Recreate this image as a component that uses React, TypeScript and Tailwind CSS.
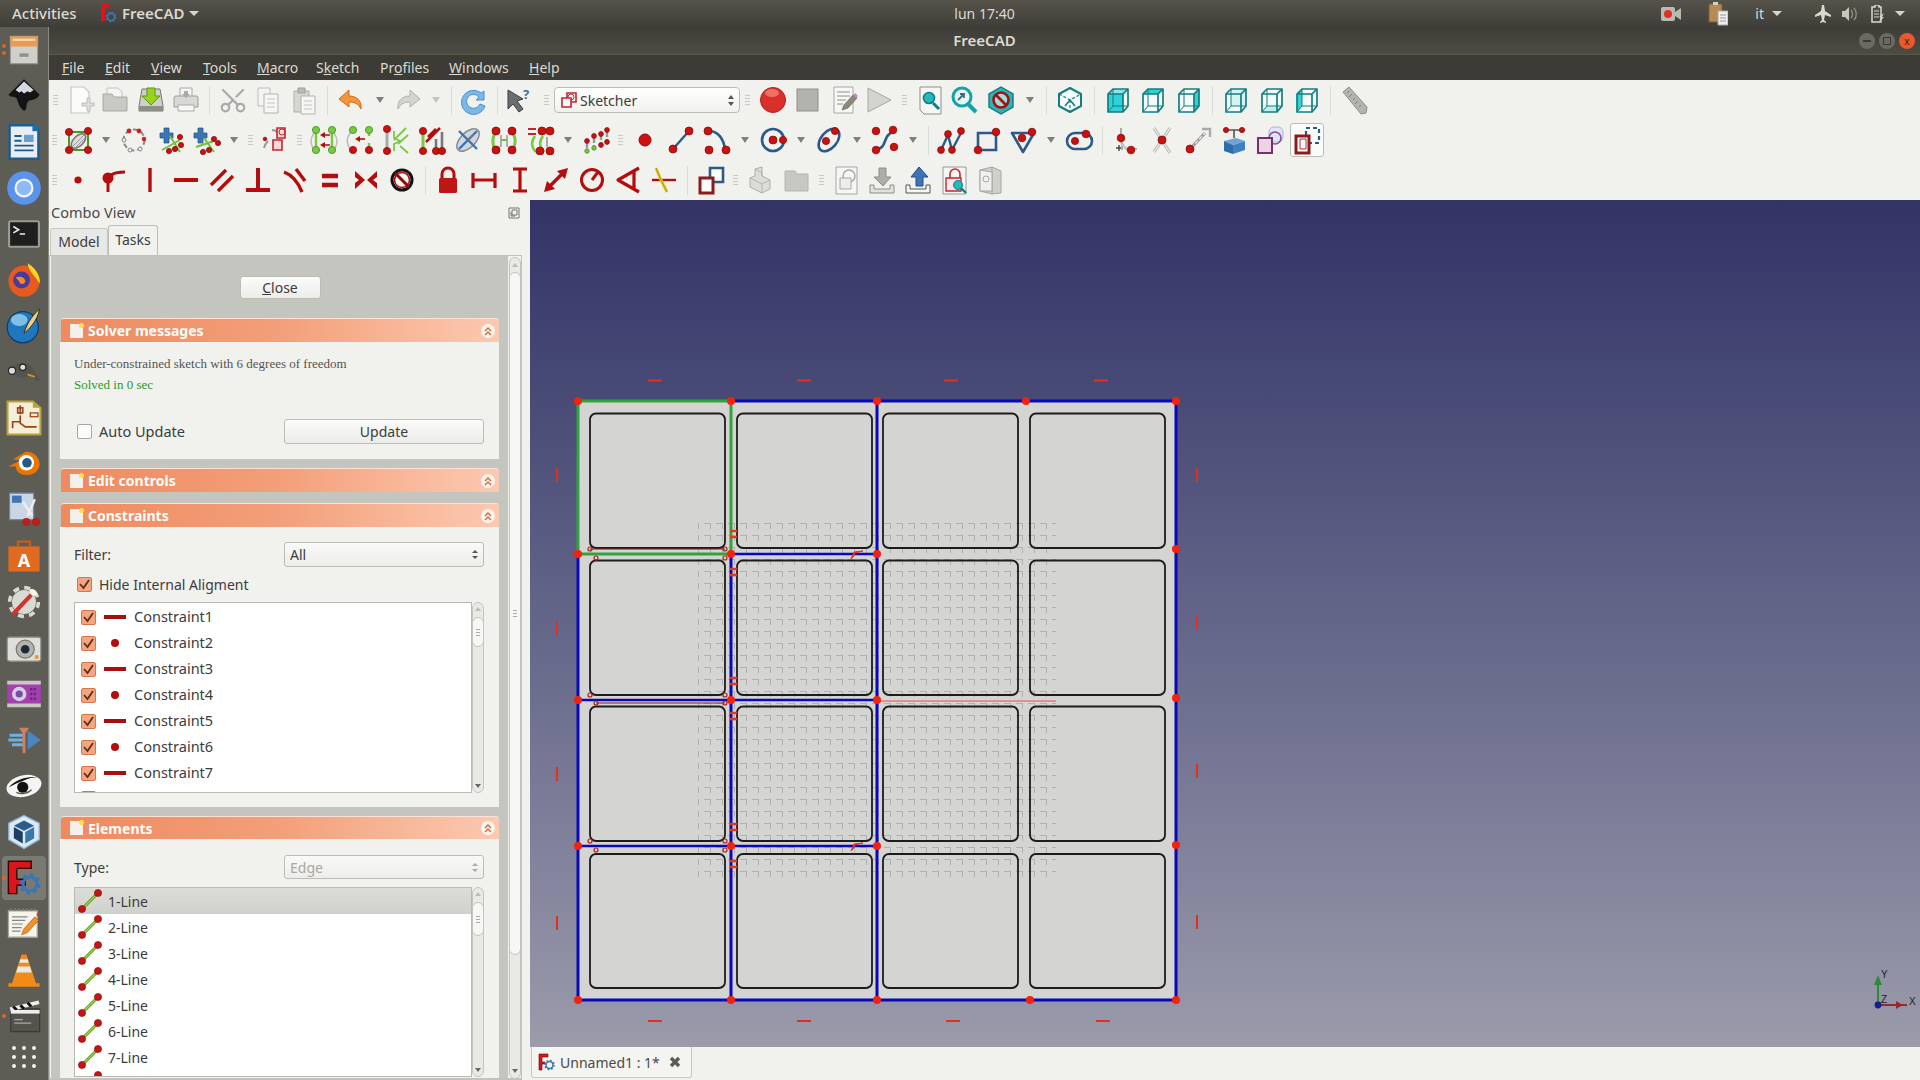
import type { ReactNode } from "react";
import { Scissors } from "lucide-react";

const ui = { fontFamily: '"Noto Sans", sans-serif' };

function Ic({ children, size = 30, view = 30 }: { children: ReactNode; size?: number; view?: number }) {
  return (
    <svg width={size} height={size} viewBox={`0 0 ${view} ${view}`} className="block">
      {children}
    </svg>
  );
}

// red sketch point
const R = ({ x, y, r = 3.6 }: { x: number; y: number; r?: number }) => (
  <circle cx={x} cy={y} r={r} fill="#cc1010" stroke="#8a0b0b" strokeWidth="0.8" />
);
const G = ({ x, y, r = 3.6 }: { x: number; y: number; r?: number }) => (
  <circle cx={x} cy={y} r={r} fill="#7ac943" stroke="#3f8a1c" strokeWidth="0.8" />
);

const Page = ({ c = "#b8b8b4", f = "#fbfbf9" }: { c?: string; f?: string }) => (
  <path d="M6 2h13l5 5v21H6z" fill={f} stroke={c} strokeWidth="1.2" />
);

function Cube({ face }: { face?: "front" | "top" | "right" | "rear" | "bottom" | "left" | "iso" }) {
  const teal = "#157d80";
  const hi = "#2fd3d6";
  return (
    <Ic>
      <path d="M5 9l5-5h15v17l-5 6H5z" fill="#f2fafa" />
      {face === "front" && <path d="M5 9h15v18H5z" fill={hi} />}
      {face === "front" && <path d="M5 9l5-5h15l-5 5z" fill="#8ce6e8" />}
      {face === "top" && <path d="M5 9l5-5h15l-5 5z" fill={hi} />}
      {face === "right" && <path d="M20 9l5-5v17l-5 6z" fill={hi} />}
      {face === "rear" && <path d="M10 4h15v17H10z" fill="#d5f3f3" />}
      {face === "bottom" && <path d="M5 27l5-6h15l-5 6z" fill="#bfeeee" />}
      {face === "left" && <path d="M5 9l5-5v17l-5 6z" fill={hi} />}
      <path d="M5 9l5-5h15v17l-5 6H5z" fill="none" stroke={teal} strokeWidth="1.7" strokeLinejoin="round" />
      <path d="M5 9h15v18M20 9l5-5" fill="none" stroke={teal} strokeWidth="1.7" />
      <path d="M10 4v17h15M10 21l-5 6" fill="none" stroke={teal} strokeWidth="1" />
    </Ic>
  );
}

const IsoCube = () => (
  <Ic>
    <path d="M15 3l11 6v12l-11 6-11-6V9z" fill="#f4fbfb" stroke="#157d80" strokeWidth="2" strokeLinejoin="round" />
    <path d="M4 9l11 6 11-6M15 15v12" fill="none" stroke="#157d80" strokeWidth="1.2" strokeDasharray="3 2" />
    <path d="M10 21l5-6 5 6" fill="none" stroke="#157d80" strokeWidth="1.6" />
  </Ic>
);

const Gear = ({ x, y, s = 1, c = "#3d74b5" }: { x: number; y: number; s?: number; c?: string }) => (
  <g>
    <circle cx={x} cy={y} r={5.8 * s} fill="none" stroke={c} strokeWidth={2.6 * s} />
    <circle cx={x} cy={y} r={7.8 * s} fill="none" stroke={c} strokeWidth={2.2 * s} strokeDasharray={`${3 * s} ${3.1 * s}`} />
  </g>
);

const Constraint = ({ d, w = 3.4 }: { d: string; w?: number }) => (
  <Ic>
    <path d={d} fill="none" stroke="#b30d0d" strokeWidth={w} strokeLinejoin="round" />
  </Ic>
);

const icons: Record<string, ReactNode> = {
  new: (
    <Ic>
      <Page c="#c6c6c2" />
      <path d="M17 18h5v-5h3v5h4v3h-4v5h-3v-5h-5z" fill="#dededa" stroke="#b5b5b0" strokeWidth="0.8" />
    </Ic>
  ),
  open: (
    <Ic>
      <path d="M7 3h11l4 4v8H7z" fill="#f4f4f2" stroke="#c2c2be" />
      <path d="M3 9h9l2 3h13v14H3z" fill="#c9c9c4" stroke="#a9a9a4" />
    </Ic>
  ),
  save: (
    <Ic>
      <path d="M6 4h18l3 17v5H3v-5z" fill="#cfd0cb" stroke="#77786f" />
      <path d="M3 21h24v5H3z" fill="#8d8e85" />
      <path d="M11 3h8v8h5l-9 9-9-9h5z" fill="#97d21f" stroke="#5d9416" />
    </Ic>
  ),
  print: (
    <Ic>
      <path d="M9 3h12v9H9z" fill="#f5f5f3" stroke="#a8a8a4" />
      <path d="M4 11h22a2 2 0 0 1 1 2v9H3v-9z" fill="#d8d8d4" stroke="#9c9c98" />
      <path d="M7 20h16v6H7z" fill="#f7f7f5" stroke="#a8a8a4" />
      <path d="M13 6h4v3h2l-4 4-4-4h2z" fill="#a9a9a5" />
    </Ic>
  ),
  cut: <Scissors size={30} strokeWidth={1.8} color="#a9aca9" className="-rotate-90" />,
  copy: (
    <Ic>
      <path d="M5 3h12v18H5z" fill="#f4f4f2" stroke="#bdbdb9" />
      <path d="M11 9h14v19H11z" fill="#f6f6f4" stroke="#b2b2ae" />
      <path d="M14 14h8M14 18h8M14 22h8" stroke="#c4c4c0" />
    </Ic>
  ),
  paste: (
    <Ic>
      <path d="M5 6h15v21H5z" fill="#d6d6d2" stroke="#b0b0ac" />
      <path d="M9 3h7v5H9z" fill="#bbbbb7" stroke="#9e9e9a" />
      <path d="M12 11h14v18H12z" fill="#f6f6f4" stroke="#b2b2ae" />
      <path d="M15 16h8M15 20h8M15 24h8" stroke="#c4c4c0" />
    </Ic>
  ),
  undo: (
    <Ic>
      <path d="M13 5L3 14l10 8v-5c5 0 9 1 12 7 1-8-4-13-12-13z" fill="#f39538" stroke="#cf6a1c" strokeLinejoin="round" />
    </Ic>
  ),
  redo: (
    <Ic>
      <path d="M17 5l10 9-10 8v-5c-5 0-9 1-12 7-1-8 4-13 12-13z" fill="#d4d5d1" stroke="#b1b2ae" strokeLinejoin="round" />
    </Ic>
  ),
  refresh: (
    <Ic>
      <path d="M25 6v9h-8l3-3a7 7 0 1 0 1 7l5 2A12 12 0 1 1 22 8z" fill="#7ab8ea" stroke="#4a90cc" />
    </Ic>
  ),
  whats: (
    <Ic>
      <path d="M2 5l15 9-6 2 6 8-4 3-6-8-5 5z" fill="#6b6e6e" stroke="#3c3e3e" />
      <text x="17" y="14" fontSize="13" fontWeight="700" fill="#3b6ea8" style={ui}>?</text>
    </Ic>
  ),
  record: (
    <Ic>
      <circle cx="15" cy="15" r="12.5" fill="#d9302a" stroke="#b01e18" />
      <ellipse cx="14" cy="8" rx="7" ry="4" fill="#f07068" />
    </Ic>
  ),
  stop: (
    <Ic>
      <rect x="4" y="4" width="21" height="22" fill="#b2b2ae" stroke="#8f8f8b" />
    </Ic>
  ),
  edit: (
    <Ic>
      <path d="M5 2h19v26H5z" fill="#f7f7f5" stroke="#a8a8a4" />
      <path d="M8 7h13M8 11h13M8 15h9M8 19h6" stroke="#8e8e8a" />
      <path d="M13 25l2-5 9-10 4 3-9 10z" fill="#8a8a7a" stroke="#55554a" strokeWidth="0.6" />
      <path d="M24 10l2-2 3 3-2 2z" fill="#c88ac4" />
    </Ic>
  ),
  play: (
    <Ic>
      <path d="M4 3l23 12L4 27z" fill="#d3d4d0" stroke="#a6a7a3" />
    </Ic>
  ),
  fitall: (
    <Ic>
      <path d="M5 2h21v27H9l-4-4z" fill="#f6f6f4" stroke="#8e8e8a" />
      <circle cx="14" cy="13" r="5.5" fill="#27b8bd" stroke="#117e83" strokeWidth="1.6" />
      <path d="M18 18l6 6" stroke="#117e83" strokeWidth="3" />
    </Ic>
  ),
  fitsel: (
    <Ic>
      <circle cx="12" cy="12" r="9" fill="#e7f7f7" stroke="#17a2a7" strokeWidth="3" />
      <path d="M18 19l8 8" stroke="#17a2a7" strokeWidth="4" />
      <path d="M8 15l6-6m-4 0h4v4" fill="none" stroke="#3d6d7a" strokeWidth="1.8" />
    </Ic>
  ),
  draw: (
    <Ic>
      <path d="M15 2l12 7v13l-12 7-12-7V9z" fill="#2ab5b8" stroke="#14787b" strokeWidth="1.4" />
      <circle cx="15" cy="15" r="7.5" fill="#9fdcdc" stroke="#a11212" strokeWidth="2.6" />
      <path d="M10 10l10 10" stroke="#a11212" strokeWidth="2.6" />
    </Ic>
  ),
  iso: <IsoCube />,
  front: <Cube face="front" />,
  top: <Cube face="top" />,
  right: <Cube face="right" />,
  rear: <Cube face="rear" />,
  bottom: <Cube face="bottom" />,
  left: <Cube face="left" />,
  ruler: (
    <Ic>
      <path d="M4 7l6-5 18 20-1 6-5 1z" fill="#b3b3af" stroke="#8f8f8b" />
      <path d="M10 6l-2 2M13 9l-3 3M16 13l-2 2M19 16l-3 3M22 20l-2 2" stroke="#7d7d79" />
    </Ic>
  ),

  // row 2, sketcher tools
  validate: (
    <Ic>
      <path d="M6 7h19v18H6z" fill="none" stroke="#4a9a22" strokeWidth="2" />
      <ellipse cx="15.5" cy="16" rx="9" ry="5" transform="rotate(-45 15.5 16)" fill="#dcdcd8" stroke="#777" strokeWidth="1.6" />
      <path d="M10 21l11-11M13 22l9-9" stroke="#999" />
      <R x={6} y={7} /><R x={25} y={6} /><R x={6} y={25} /><R x={25} y={25} />
    </Ic>
  ),
  closeShape: (
    <Ic>
      <circle cx="15" cy="15" r="10.5" fill="none" stroke="#8a8a86" strokeWidth="2" strokeDasharray="5 3" />
      <circle cx="10" cy="6" r="2.4" fill="#c22" /><circle cx="20" cy="6" r="2.4" fill="#c22" />
      <circle cx="25" cy="14" r="2.2" fill="#c22" /><circle cx="5" cy="15" r="2" fill="#eee" stroke="#888" />
      <circle cx="21" cy="24" r="2" fill="#eee" stroke="#888" /><circle cx="11" cy="25" r="2" fill="#eee" stroke="#888" />
    </Ic>
  ),
  connect1: (
    <Ic>
      <path d="M9 3h5v5h4v5h-4v5H9v-5H5V8h4z" fill="#3d74b5" stroke="#234f85" strokeWidth="0.7" />
      <path d="M7 25l18-10M15 11l10 16" stroke="#6fc23a" strokeWidth="2" />
      <R x={25} y={12} r={2.6} /><R x={20} y={24} r={2.6} /><R x={14} y={26} r={2.6} /><R x={26} y={20} r={2.6} />
    </Ic>
  ),
  connect2: (
    <Ic>
      <path d="M7 3h5v5h4v5h-4v5H7v-5H3V8h4z" fill="#3d74b5" stroke="#234f85" strokeWidth="0.7" />
      <path d="M5 22l18-6M13 13l10 14" stroke="#6fc23a" strokeWidth="2" />
      <R x={23} y={14} r={2.6} /><R x={18} y={25} r={2.6} /><R x={12} y={27} r={2.6} /><R x={27} y={18} r={2.6} />
    </Ic>
  ),
  carbonTop: (
    <Ic>
      <path d="M5 23c1-4 2-5 4-7M13 5c4 0 5 1 7 3" fill="none" stroke="#999" strokeWidth="2" />
      <path d="M14 15h9v10h-9z" fill="#f8d9d9" stroke="#c0272d" strokeWidth="1.6" />
      <path d="M18 3h8v10h-8z" fill="#f8d9d9" stroke="#c0272d" strokeWidth="1.6" />
      <circle cx="23" cy="7" r="3" fill="none" stroke="#c0272d" />
      <R x={6} y={14} r={1.8} />
    </Ic>
  ),
  sel1: (
    <Ic>
      <path d="M7 5v21M23 5v21" stroke="#7ac943" strokeWidth="2.4" />
      <path d="M5 8c-4 6-4 10 0 17M25 8c4 6 4 10 0 17" fill="none" stroke="#bbb" strokeWidth="1.4" />
      <path d="M21 10h-7M21 20h-7" stroke="#b30d0d" strokeWidth="1.6" />
      <path d="M11 10l5-3v6zM11 20l5-3v6z" fill="#b30d0d" />
      <G x={7} y={5} /><G x={23} y={5} /><G x={7} y={25} /><G x={23} y={25} />
    </Ic>
  ),
  sel2: (
    <Ic>
      <path d="M24 5v6M24 18v8" stroke="#7ac943" strokeWidth="2.4" />
      <path d="M6 7c-5 6-5 12 0 18" fill="none" stroke="#bbb" strokeWidth="1.4" />
      <path d="M20 14h-7" stroke="#b30d0d" strokeWidth="1.6" />
      <path d="M10 14l5-3v6z" fill="#b30d0d" />
      <G x={8} y={5} /><R x={8} y={25} /><G x={24} y={5} /><R x={24} y={25} />
    </Ic>
  ),
  sel3: (
    <Ic>
      <path d="M6 4v23" stroke="#aaa" strokeWidth="3" />
      <path d="M13 6v7l6 3-6 3v7" fill="none" stroke="#7ac943" strokeWidth="1.8" />
      <path d="M13 15l12-12M17 19l10-9M19 21l8 7" stroke="#7ac943" strokeWidth="1.8" />
      <R x={6} y={4} /><R x={6} y={26} />
    </Ic>
  ),
  sel4: (
    <Ic>
      <path d="M6 6v20" stroke="#7ac943" strokeWidth="3" />
      <path d="M25 7v20M19 14v13" stroke="#7a7a7a" strokeWidth="2.6" />
      <path d="M9 17L23 3M11 12l8-8" stroke="#b30d0d" strokeWidth="2.6" />
      <R x={6} y={6} /><R x={6} y={26} /><R x={19} y={26} /><R x={25} y={26} />
    </Ic>
  ),
  sel5: (
    <Ic>
      <ellipse cx="15" cy="15" rx="7.5" ry="14" transform="rotate(45 15 15)" fill="#ccd8e4" stroke="#888" strokeWidth="1.4" />
      <path d="M6 6l18 18M24 6L6 24" stroke="#3d74b5" strokeWidth="2.4" />
      <path d="M21 9l-6 6" stroke="#777" strokeWidth="2" />
    </Ic>
  ),
  sel6: (
    <Ic>
      <path d="M6 8c-3 6-3 11 0 16M24 8c3 6 3 11 0 16" fill="none" stroke="#7ac943" strokeWidth="3" />
      <path d="M12 10v12M18 10v12" stroke="#999" strokeWidth="1.5" />
      <path d="M12 15h6" stroke="#6fc23a" strokeWidth="2" />
      <R x={7} y={6} r={4} /><R x={23} y={6} r={4} /><R x={7} y={25} r={4} /><R x={23} y={25} r={4} />
    </Ic>
  ),
  sel7: (
    <Ic>
      <path d="M3 4h8M3 9h8" stroke="#c0272d" strokeWidth="2" />
      <path d="M10 11c-4 5-4 11 1 16M18 11c-4 5-4 11 1 16" fill="none" stroke="#7ac943" strokeWidth="2.6" />
      <path d="M22 12v10" stroke="#aaa" strokeWidth="2" />
      <R x={17} y={6} r={4} /><R x={25} y={6} r={4} /><R x={15} y={26} r={4} /><R x={25} y={26} r={4} />
    </Ic>
  ),
  sel8: (
    <Ic>
      <path d="M6 17v8M13 12v10M20 9v11M26 6v10" stroke="#999" strokeWidth="2.4" strokeDasharray="6 2" />
      <R x={6} y={16} r={2.4} /><R x={13} y={11} r={2.4} /><R x={20} y={9} r={2.4} /><R x={26} y={5} r={2.4} />
      <G x={6} y={26} r={2.2} /><G x={13} y={23} r={2.2} /><R x={20} y={20} r={2.4} /><R x={26} y={17} r={2.4} />
    </Ic>
  ),
  point: (
    <Ic>
      <circle cx="15" cy="15" r="6" fill="#d40f0f" stroke="#8a0b0b" />
    </Ic>
  ),
  line: (
    <Ic>
      <path d="M7 24L23 6" stroke="#2b5a8a" strokeWidth="2.4" />
      <R x={7} y={24} r={4} /><R x={23} y={6} r={4} />
    </Ic>
  ),
  arc: (
    <Ic>
      <path d="M7 6c9 0 15 8 16 19" fill="none" stroke="#2b5a8a" strokeWidth="2.6" />
      <R x={6} y={6} r={4} /><R x={7} y={25} r={4} /><R x={24} y={25} r={4} />
    </Ic>
  ),
  circle: (
    <Ic>
      <circle cx="15" cy="15" r="11" fill="none" stroke="#2b5a8a" strokeWidth="2.6" />
      <R x={15} y={15} r={4} /><R x={25} y={15} r={3.6} />
    </Ic>
  ),
  ellipse: (
    <Ic>
      <ellipse cx="15" cy="15" rx="8" ry="13" transform="rotate(40 15 15)" fill="none" stroke="#2b5a8a" strokeWidth="2.6" />
      <R x={12} y={16} r={3.6} /><R x={21} y={6} r={3.6} />
    </Ic>
  ),
  bspline: (
    <Ic>
      <path d="M6 24c12 0 6-15 18-17" fill="none" stroke="#2b5a8a" strokeWidth="2.6" />
      <R x={6} y={6} r={3.8} /><R x={23} y={5} r={3.8} /><R x={6} y={25} r={3.8} /><R x={24} y={22} r={3.8} />
    </Ic>
  ),
  polyline: (
    <Ic>
      <path d="M5 25l7-15 4 15 10-19" fill="none" stroke="#2b5a8a" strokeWidth="2.4" />
      <R x={5} y={25} r={3.4} /><R x={12} y={9} r={3.4} /><R x={16} y={25} r={3.4} /><R x={25} y={6} r={3.4} />
    </Ic>
  ),
  rect: (
    <Ic>
      <path d="M6 8h18v17H6z" fill="none" stroke="#2b5a8a" strokeWidth="2.6" />
      <R x={6} y={25} r={3.8} /><R x={24} y={7} r={3.8} />
    </Ic>
  ),
  tri: (
    <Ic>
      <path d="M4 8h22L15 27z" fill="none" stroke="#2b5a8a" strokeWidth="2.6" strokeLinejoin="round" />
      <R x={14} y={13} r={3.8} /><R x={24} y={7} r={3.8} />
    </Ic>
  ),
  slot: (
    <Ic>
      <rect x="3" y="8" width="25" height="16" rx="8" fill="none" stroke="#2b5a8a" strokeWidth="2.6" />
      <R x={11} y={16} r={3.6} /><R x={22} y={9} r={3.8} />
    </Ic>
  ),
  fillet: (
    <Ic>
      <path d="M10 3v14l5 7h11M11 25V18" fill="none" stroke="#999" strokeWidth="1.6" />
      <path d="M5 23h5M8 20v6" stroke="#444" strokeWidth="1.4" />
      <path d="M10 19l8 6" stroke="#ccc" strokeWidth="2" />
      <R x={10} y={13} r={3.8} /><R x={20} y={25} r={3.8} />
    </Ic>
  ),
  trim: (
    <Ic>
      <path d="M7 3l16 25M23 3L7 27" stroke="#b0b0ac" strokeWidth="3" />
      <path d="M7 3l16 25M23 3L7 27" stroke="#f4f4f2" strokeWidth="1.2" />
      <R x={15} y={15} r={4} />
    </Ic>
  ),
  extend: (
    <Ic>
      <path d="M8 23l14-15" stroke="#999" strokeWidth="3" />
      <path d="M8 23l14-15" stroke="#f4f4f2" strokeWidth="1.2" strokeDasharray="4 2" />
      <path d="M19 4h8v8" fill="none" stroke="#aaa" strokeWidth="2.4" />
      <R x={7} y={24} r={4} />
    </Ic>
  ),
  external: (
    <Ic>
      <path d="M5 16l12-3 9 3-12 4z" fill="#6fa3d6" />
      <path d="M5 16v10l9 3V20z" fill="#2f6ca8" />
      <path d="M14 20v9l12-4v-9z" fill="#3f82c4" />
      <path d="M6 5h18M15 5v8" stroke="#555" strokeWidth="1.6" />
      <R x={7} y={5} r={2.6} /><R x={23} y={5} r={2.6} />
    </Ic>
  ),
  carbon: (
    <Ic>
      <rect x="14" y="2" width="14" height="15" rx="5" fill="#dfe6fa" stroke="#a8b4e8" />
      <circle cx="20" cy="13" r="6" fill="none" stroke="#8f4d8f" strokeWidth="1.6" />
      <path d="M3 13h14v15H3z" fill="#e9d6e4" stroke="#7d2d6f" strokeWidth="2" />
    </Ic>
  ),
  toggleActive: (
    <Ic>
      <path d="M14 3h13v15H14z" fill="none" stroke="#2b5a8a" strokeWidth="2.2" strokeDasharray="4 3" />
      <path d="M4 11h13v17H4z" fill="#fff" stroke="#8c1c1c" strokeWidth="3" />
      <path d="M8 14h6v10H8z" fill="#fff" stroke="#c0272d" strokeWidth="1" />
    </Ic>
  ),

  // row 3, constraints
  cPoint: (
    <Ic>
      <circle cx="15" cy="15" r="3.6" fill="#b30d0d" />
    </Ic>
  ),
  cTangentPt: (
    <Ic>
      <path d="M9 27V16c0-6 6-9 17-9" fill="none" stroke="#b30d0d" strokeWidth="3" />
      <circle cx="9" cy="13" r="5.5" fill="#b30d0d" />
    </Ic>
  ),
  cVert: <Constraint d="M15 3v24" />,
  cHoriz: <Constraint d="M3 15h24" w={4} />,
  cPar: <Constraint d="M4 20L19 5M11 26L26 11" w={3.4} />,
  cPerp: <Constraint d="M15 3v22M3 25h24" w={4} />,
  cTan: <Constraint d="M5 7c8 3 14 10 18 20M17 4l9 12" w={3.4} />,
  cEq: <Constraint d="M7 11h16M7 20h16" w={4.4} />,
  cSym: (
    <Ic>
      <path d="M4 6l10 9L4 24v-6l4-3-4-3zM26 6L16 15l10 9v-6l-4-3 4-3z" fill="#b30d0d" />
    </Ic>
  ),
  cBlock: (
    <Ic>
      <circle cx="15" cy="15" r="10" fill="#f4f4f2" stroke="#111" strokeWidth="3" />
      <circle cx="15" cy="15" r="7.5" fill="none" stroke="#b30d0d" strokeWidth="1.6" />
      <path d="M8 8l14 14" stroke="#8a0b0b" strokeWidth="3" />
    </Ic>
  ),
  lock: (
    <Ic>
      <path d="M9 14V9a6 6 0 0 1 12 0v5" fill="none" stroke="#b30d0d" strokeWidth="3" />
      <rect x="6" y="13" width="18" height="15" rx="1.5" fill="#c01515" />
    </Ic>
  ),
  dH: <Constraint d="M4 8v15M26 8v15M4 15h22" w={3.2} />,
  dV: <Constraint d="M8 4h14M8 26h14M15 4v22" w={3.2} />,
  dist: (
    <Ic>
      <path d="M8 22L22 8" stroke="#b30d0d" strokeWidth="3.4" />
      <path d="M27 3l-3 11-8-8zM3 27l3-11 8 8z" fill="#b30d0d" />
    </Ic>
  ),
  radius: (
    <Ic>
      <circle cx="15" cy="15" r="10.5" fill="none" stroke="#b30d0d" strokeWidth="3" />
      <path d="M15 15l6-8" stroke="#b30d0d" strokeWidth="3" />
    </Ic>
  ),
  angle: <Constraint d="M26 3L5 15l21 12M21 6v18" w={3.2} />,
  snell: (
    <Ic>
      <path d="M3 15h24" stroke="#b30d0d" strokeWidth="2.4" />
      <path d="M7 3l5 12 6 12" fill="none" stroke="#e2c81c" strokeWidth="3" />
      <path d="M7 3l5 12 6 12" fill="none" stroke="#7d6a08" strokeWidth="0.5" />
    </Ic>
  ),
  toggleRef: (
    <Ic>
      <path d="M14 3h13v14H14z" fill="#fff" stroke="#2b5a8a" strokeWidth="2.6" />
      <path d="M4 13h13v15H4z" fill="#fff" stroke="#8c1c1c" strokeWidth="3" />
    </Ic>
  ),
  part: (
    <Ic>
      <path d="M10 4l7-2v9l8 4v9l-8 4-12-6v-9l5-2z" fill="#dcdcd8" stroke="#adadA8" />
      <path d="M5 13l12 6v9M17 19l8-4M10 4l7 4v3" fill="none" stroke="#b5b5b0" />
    </Ic>
  ),
  folder: (
    <Ic>
      <path d="M4 6h10l2 3h11v17H4z" fill="#c8c8c3" stroke="#b5b5b0" />
    </Ic>
  ),
  tool1: (
    <Ic>
      <path d="M5 2h21v27H5z" fill="#f6f6f4" stroke="#a6a6a2" />
      <circle cx="18" cy="11" r="6" fill="none" stroke="#a6a6a2" strokeWidth="1.4" />
      <path d="M9 13h11v11H9z" fill="#ededea" stroke="#a6a6a2" />
    </Ic>
  ),
  tool2: (
    <Ic>
      <path d="M12 3h7v9h5l-8 9-9-9h5z" fill="#acacA8" stroke="#8e8e8a" />
      <path d="M3 20v8h24v-8h-4v4H7v-4z" fill="#e2e2de" stroke="#8e8e8a" />
    </Ic>
  ),
  tool3: (
    <Ic>
      <path d="M16 2l9 10h-5v9h-7v-9H8z" fill="#3d74b5" stroke="#234f85" />
      <path d="M3 20v8h24v-8h-4v4H7v-4z" fill="#f6f6f4" stroke="#555" />
    </Ic>
  ),
  tool4: (
    <Ic>
      <path d="M4 2h23v27H4z" fill="#f6f6f4" stroke="#999" />
      <path d="M11 14V9a5 5 0 0 1 10 0v5" fill="none" stroke="#c0272d" strokeWidth="1.6" />
      <path d="M7 13h15v13H7z" fill="#fbe9e9" stroke="#c0272d" strokeWidth="1.4" />
      <circle cx="19" cy="20" r="4.5" fill="#27b8bd" stroke="#117e83" />
      <path d="M22 23l5 5" stroke="#117e83" strokeWidth="2.4" />
    </Ic>
  ),
  tool5: (
    <Ic>
      <path d="M5 5l12-3 9 4v22l-9 1-12-3z" fill="#cfcfcb" stroke="#a6a6a2" />
      <path d="M17 2v27" stroke="#a6a6a2" />
      <path d="M5 5v21h12V7z" fill="#f0f0ee" stroke="#a6a6a2" />
      <circle cx="11" cy="14" r="3" fill="none" stroke="#a6a6a2" />
    </Ic>
  ),
};

// toolbar pieces: icons are 35.5 or 36 wide, the rest fills the row up to its real x
function Tool({ name, wide }: { name: string; wide?: boolean }) {
  return <div className={`flex shrink-0 items-center justify-center ${wide ? "w-[36px]" : "w-[35.5px]"}`}>{icons[name]}</div>;
}
function Drop({ w = "w-[20px]", dim }: { w?: string; dim?: boolean }) {
  return (
    <div className={`flex shrink-0 items-center justify-center ${w}`}>
      <div className={`h-0 w-0 border-x-[4px] border-t-[6px] border-x-transparent ${dim ? "border-t-[#c4c4c0]" : "border-t-[#7f7f7b]"}`} />
    </div>
  );
}
function Sep({ w }: { w: string }) {
  return (
    <div className={`flex shrink-0 justify-center ${w}`}>
      <div className="h-[29px] w-px bg-[#dcdcd8]" />
    </div>
  );
}
function Handle({ w }: { w: string }) {
  return (
    <div className={`flex shrink-0 flex-col items-center justify-center gap-[2px] ${w}`}>
      <div className="h-px w-[5px] bg-[#c8c8c4]" />
      <div className="h-px w-[5px] bg-[#c8c8c4]" />
      <div className="h-px w-[5px] bg-[#c8c8c4]" />
      <div className="h-px w-[5px] bg-[#c8c8c4]" />
    </div>
  );
}

function Toolbars() {
  const row = "flex h-[40px] items-center";
  const W = ({ n }: { n: string }) => <Tool name={n} wide />;
  return (
    <div className="h-[120px] shrink-0 bg-[#f1f1ee]" style={ui}>
      <div className={row}>
        <Handle w="w-[13px]" />
        <Tool name="new" /><Tool name="open" /><Tool name="save" /><Tool name="print" />
        <Sep w="w-[11px]" />
        <Tool name="cut" /><Tool name="copy" /><Tool name="paste" />
        <Sep w="w-[11.5px]" />
        <Tool name="undo" /><Drop w="w-[22px]" />
        <Tool name="redo" /><Drop dim />
        <Sep w="w-[10px]" />
        <Tool name="refresh" />
        <Sep w="w-[12px]" />
        <Tool name="whats" />
        <Handle w="w-[15px]" />
        <div className="flex h-[26px] w-[186px] shrink-0 items-center rounded-[4px] border border-[#bdbdb8] bg-linear-to-b from-[#ffffff] to-[#f1f1ee] pl-[6px] text-[14px] text-[#3c3c3c]">
          <svg width="16" height="16" viewBox="0 0 16 16" className="mr-[3px]">
            <path d="M6 1h9v9H6z" fill="#fff" stroke="#c0272d" strokeWidth="1.6" />
            <circle cx="10" cy="5" r="3" fill="none" stroke="#c0272d" />
            <path d="M1 6h9v9H1z" fill="#fff" stroke="#c0272d" strokeWidth="1.6" />
          </svg>
          Sketcher
          <div className="ml-auto mr-[5px] flex flex-col gap-[3px]">
            <div className="h-0 w-0 border-x-[3px] border-b-[4px] border-x-transparent border-b-[#555]" />
            <div className="h-0 w-0 border-x-[3px] border-t-[4px] border-x-transparent border-t-[#555]" />
          </div>
        </div>
        <Handle w="w-[15px]" />
        <Tool name="record" /><Tool name="stop" /><Tool name="edit" /><Tool name="play" />
        <Handle w="w-[15px]" />
        <Tool name="fitall" /><Tool name="fitsel" /><Tool name="draw" /><Drop w="w-[22px]" />
        <Sep w="w-[12px]" />
        <Tool name="iso" />
        <Sep w="w-[12px]" />
        <Tool name="front" /><Tool name="top" /><Tool name="right" />
        <Sep w="w-[12px]" />
        <Tool name="rear" /><Tool name="bottom" /><Tool name="left" />
        <Sep w="w-[11px]" />
        <Tool name="ruler" />
      </div>
      <div className={row}>
        <Handle w="w-[11px]" />
        <W n="validate" /><Drop />
        <W n="closeShape" /><W n="connect1" /><W n="connect2" /><Drop />
        <Handle w="w-[12px]" />
        <W n="carbonTop" />
        <Handle w="w-[14px]" />
        <W n="sel1" /><W n="sel2" /><W n="sel3" /><W n="sel4" /><W n="sel5" /><W n="sel6" /><W n="sel7" /><Drop />
        <W n="sel8" />
        <Handle w="w-[13px]" />
        <W n="point" /><W n="line" /><W n="arc" /><Drop />
        <W n="circle" /><Drop />
        <W n="ellipse" /><Drop />
        <W n="bspline" /><Drop />
        <Sep w="w-[10px]" />
        <W n="polyline" /><W n="rect" /><W n="tri" /><Drop />
        <W n="slot" />
        <Sep w="w-[11px]" />
        <W n="fillet" /><W n="trim" /><W n="extend" /><W n="external" /><W n="carbon" />
        <div className="ml-[2px] flex h-[34px] w-[34px] shrink-0 items-center justify-center rounded-[3px] border border-[#bdbdb8] bg-[#fbfbfa]">
          {icons.toggleActive}
        </div>
      </div>
      <div className={row}>
        <Handle w="w-[11px]" />
        <W n="cPoint" /><W n="cTangentPt" /><W n="cVert" /><W n="cHoriz" /><W n="cPar" />
        <W n="cPerp" /><W n="cTan" /><W n="cEq" /><W n="cSym" /><W n="cBlock" />
        <Sep w="w-[10px]" />
        <W n="lock" /><W n="dH" /><W n="dV" /><W n="dist" /><W n="radius" /><W n="angle" /><W n="snell" />
        <Sep w="w-[11px]" />
        <W n="toggleRef" />
        <Handle w="w-[13px]" />
        <W n="part" /><W n="folder" />
        <Handle w="w-[14px]" />
        <W n="tool1" /><W n="tool2" /><W n="tool3" /><W n="tool4" /><W n="tool5" />
      </div>
    </div>
  );
}

function TopBar() {
  return (
    <div className="relative flex h-[27px] shrink-0 items-center bg-linear-to-b from-[#55534a] to-[#3f3e39] text-[14px] text-[#dcd9d1]" style={ui}>
      <span className="ml-[12px] w-[88px] text-[15px] font-medium">Activities</span>
      <svg width="18" height="20" viewBox="0 0 18 20">
        <path d="M1 0h9v4H5v13H1z" fill="#d9161c" />
        <Gear x={11} y={13} s={0.62} />
      </svg>
      <span className="ml-[4px] text-[15px] font-semibold">FreeCAD</span>
      <div className="ml-[5px] h-0 w-0 border-x-[5px] border-t-[5px] border-x-transparent border-t-[#d8d5cd]" />
      <span className="absolute left-[49px] right-0 text-center">lun 17:40</span>
      <div className="ml-auto flex items-center">
        <svg width="20" height="16" viewBox="0 0 20 16" className="mr-[27px]">
          <rect y="1" width="14" height="14" rx="2" fill="#b9b9b4" />
          <path d="M14 6l6-4v12l-6-4z" fill="#b9b9b4" />
          <circle cx="7" cy="8" r="4" fill="#e0301e" />
        </svg>
        <svg width="20" height="24" viewBox="0 0 20 24" className="mr-[27px]">
          <path d="M1 2h13v18H1z" fill="#b58a55" stroke="#7d5d32" />
          <path d="M5 0h5v3H5z" fill="#d6d2c8" />
          <path d="M10 9h10v14H10z" fill="#eee" stroke="#aaa" />
          <path d="M12 13h6M12 16h6M12 19h6" stroke="#999" />
        </svg>
        <span className="mr-[8px]">it</span>
        <div className="mr-[33px] h-0 w-0 border-x-[5px] border-t-[5px] border-x-transparent border-t-[#d8d5cd]" />
        <svg width="16" height="18" viewBox="0 0 16 18" className="mr-[11px]">
          <path d="M7 0h2l1 6 6 4v2l-6-2-1 5 2 2v1l-3-1-3 1v-1l2-2-1-5-6 2v-2l6-4z" fill="#dcd9d1" />
        </svg>
        <svg width="16" height="16" viewBox="0 0 16 16" className="mr-[13px]">
          <path d="M0 5h3l4-4v14l-4-4H0z" fill="#c9c6be" />
          <path d="M9 4c2 2 2 6 0 8M12 2c3 3 3 9 0 12" fill="none" stroke="#8f8d85" strokeWidth="1.4" />
        </svg>
        <svg width="14" height="18" viewBox="0 0 14 18" className="mr-[10px]">
          <path d="M4 0h4v2h2v15H1V2h3z" fill="none" stroke="#dcd9d1" strokeWidth="1.5" />
          <path d="M3 6h5M3 9h5M3 12h5" stroke="#dcd9d1" />
          <path d="M8 12l5-4-2 4h2l-5 5 2-5z" fill="#dcd9d1" />
        </svg>
        <div className="mr-[15px] h-0 w-0 border-x-[5px] border-t-[5px] border-x-transparent border-t-[#d8d5cd]" />
      </div>
    </div>
  );
}

function TitleBar() {
  const btn = "flex h-[16px] w-[16px] items-center justify-center rounded-full";
  return (
    <div className="relative flex h-[28px] shrink-0 items-center justify-center border-b border-[#5a5648] bg-linear-to-b from-[#3d3c37] to-[#4d4c44] text-[15px] font-semibold text-[#dfdbd2]" style={ui}>
      FreeCAD
      <div className="absolute right-[5px] top-[6px] flex gap-[4px]">
        <div className={`${btn} bg-[#6a6a62]`}><div className="h-[2px] w-[8px] bg-[#3a3a34]" /></div>
        <div className={`${btn} bg-[#6a6a62]`}><div className="h-[8px] w-[8px] border border-[#3a3a34]" /></div>
        <div className={`${btn} bg-[#e9592b] text-[10px] font-normal text-[#4a1a0a]`}>x</div>
      </div>
    </div>
  );
}

function MenuBar() {
  return (
    <div className="flex h-[25px] shrink-0 items-center bg-[#3c3b35] pl-[13px] text-[14px] text-[#dcd9d1]" style={ui}>
      <span className="w-[43px]"><u>F</u>ile</span>
      <span className="w-[46px]"><u>E</u>dit</span>
      <span className="w-[52px]"><u>V</u>iew</span>
      <span className="w-[54px]"><u>T</u>ools</span>
      <span className="w-[59px]"><u>M</u>acro</span>
      <span className="w-[64px]">S<u>k</u>etch</span>
      <span className="w-[69px]">Pr<u>o</u>files</span>
      <span className="w-[80px]"><u>W</u>indows</span>
      <span><u>H</u>elp</span>
    </div>
  );
}

const dockIcons: { key: string; node: ReactNode; h?: string }[] = [
  { key: "files", node: <Ic size={34} view={30}><path d="M3 3h24v24H3z" fill="#d0d0ca" stroke="#9a9a94" /><path d="M3 3h24v9H3z" fill="#e89a55" /><path d="M5 5h20v2H5z" fill="#f6d7a8" /><path d="M11 18h8v3h-8z" fill="#8f8f89" /></Ic> },
  { key: "inkscape", node: <Ic size={36} view={30}><path d="M15 1L2 14c3 3 5 1 7 3 1 3 2 8 6 10 3 1 1-6 4-8 2-1 6 0 9-5z" fill="#141414" /><path d="M15 3L8 10l3 2 2-1 2 2 3-2 2 1 3-2z" fill="#d4d9e0" /></Ic> },
  { key: "writer", node: <Ic size={36} view={30}><path d="M3 1h20l4 4v24H3z" fill="#e8eef4" stroke="#1c5d8f" strokeWidth="2" /><path d="M22 1h5v5h-5z" fill="#1c6fa8" /><path d="M7 10h6M7 14h6M7 18h16M7 22h16" stroke="#1c5d8f" strokeWidth="1.6" /><path d="M15 9h8v6h-8z" fill="#6c9fc9" /></Ic> },
  { key: "chrome", node: <Ic size={36} view={30}><circle cx="15" cy="15" r="14" fill="#5b93ea" /><circle cx="15" cy="15" r="7" fill="#8fbaf7" stroke="#f4f8ff" strokeWidth="1.8" /></Ic> },
  { key: "terminal", node: <Ic size={32} view={30}><rect x="1" y="3" width="28" height="24" rx="1.5" fill="#1e1e1e" stroke="#9a9a94" strokeWidth="2" /><path d="M5 8l5 3-5 3M11 15h5" fill="none" stroke="#eee" strokeWidth="1.5" /></Ic> },
  { key: "firefox", node: <Ic size={36} view={30}><circle cx="15" cy="16" r="13" fill="#e8591d" /><path d="M18 1c8 5 11 12 10 17-4-7-9-10-10-17z" fill="#f9d423" /><circle cx="13" cy="15" r="7" fill="#4a3a9e" /><path d="M8 13c4-2 8 0 8 3s-5 3-5 0" fill="#f58a2a" /></Ic> },
  { key: "scrivener", node: <Ic size={36} view={30}><circle cx="14" cy="16" r="13" fill="#1f77bd" stroke="#0d3d66" /><ellipse cx="11" cy="10" rx="7" ry="5" fill="#7fc0ea" /><path d="M28 1c-4 3-10 10-13 20 4-3 11-10 13-20z" fill="#e9cf8a" stroke="#3a2a10" strokeWidth="0.8" /></Ic> },
  { key: "gimp", node: <Ic size={36} view={30}><path d="M4 12c3-5 12-6 17-2l8 12-3 1-6-5c-5 3-11 2-14-2z" fill="#55534d" /><circle cx="5" cy="14" r="3" fill="#ddd" stroke="#222" /><circle cx="14" cy="11" r="2.6" fill="#ddd" stroke="#222" /><path d="M18 17l6 2" stroke="#c49a2a" strokeWidth="1.6" /></Ic> },
  { key: "kicad", node: <Ic size={38} view={30}><path d="M2 2h20l6 5v21H2z" fill="#f3efd8" stroke="#b8a23a" strokeWidth="1.6" /><path d="M22 2l6 5h-6z" fill="#b8a23a" /><path d="M12 5v7M10 7h4v4h-4zM12 13v6l4 3h9M12 18H6v5" fill="none" stroke="#a0401c" strokeWidth="1.3" /><rect x="20" y="11" width="6" height="3" fill="none" stroke="#a0401c" /></Ic> },
  { key: "blender", node: <Ic size={36} view={30}><path d="M2 17l10-5-6-1 10-6c6-1 12 4 12 10 0 6-6 10-12 9-5 0-8-4-8-7z" fill="#ea7600" /><circle cx="17" cy="14" r="6.4" fill="#fff" /><circle cx="17.5" cy="14" r="4" fill="#265787" /></Ic> },
  { key: "scan", node: <Ic size={36} view={30}><path d="M3 1h20v22H3z" fill="#c8d6e6" stroke="#6f8aa8" /><path d="M5 3h8v6H5z" fill="#3d74b5" /><path d="M14 8l8 12M24 6l-6 14" stroke="#eee" strokeWidth="2" /><circle cx="17" cy="25" r="3.4" fill="#b81f1f" /><circle cx="25" cy="25" r="3.4" fill="#b81f1f" /></Ic> },
  { key: "software", node: <Ic size={36} view={30}><path d="M2 7h26v21H2z" fill="#e06b20" /><path d="M10 7V3h10v4" fill="none" stroke="#c95c18" strokeWidth="2" /><text x="15" y="24" textAnchor="middle" fontSize="15" fontWeight="700" fill="#fff" style={ui}>A</text></Ic> },
  { key: "settings", node: <Ic size={36} view={30}><circle cx="15" cy="15" r="10" fill="#dadad4" /><circle cx="15" cy="15" r="12" fill="none" stroke="#dadad4" strokeWidth="3" strokeDasharray="5 4.4" /><path d="M6 25L21 9" stroke="#d0342c" strokeWidth="3.4" /><path d="M19 5c3-2 7 0 7 4l-3 1-2-2z" fill="#f4f4f2" /></Ic> },
  { key: "camera", node: <Ic size={36} view={30}><rect x="1" y="6" width="28" height="20" rx="2" fill="#dededa" stroke="#8f8f89" /><circle cx="16" cy="16" r="7.5" fill="#b4b4ae" stroke="#77776f" /><circle cx="16" cy="16" r="3.6" fill="#1c2a3a" /><rect x="24" y="21" width="3" height="3" fill="#e39a2a" /></Ic> },
  { key: "kamoso", node: <Ic size={36} view={30}><rect x="1" y="4" width="28" height="22" fill="#a43fb0" /><path d="M1 4h28v3H1zM1 23h28v3H1z" fill="#c9c9c3" /><circle cx="11" cy="15" r="6" fill="#d8cfe0" /><circle cx="11" cy="15" r="3" fill="#7a4aa8" /><path d="M20 11h6M20 15h6M20 19h6" stroke="#6e2a78" strokeWidth="2" strokeDasharray="2 1" /></Ic> },
  { key: "arrow", node: <Ic size={36} view={30}><path d="M3 11h12M2 15h13M5 19h10" stroke="#6fb0e0" strokeWidth="2.6" /><path d="M17 6h-4l2 3zM15 5v21" stroke="#d08060" strokeWidth="2.4" fill="#d08060" /><path d="M18 7l11 8-11 8z" fill="#4a86c0" /></Ic> },
  { key: "eye", node: <Ic size={38} view={30}><ellipse cx="15" cy="15" rx="14" ry="8.5" transform="rotate(-12 15 15)" fill="#f4f4f2" /><path d="M3 16c5-6 14-9 23-8-6 0-10 2-12 3-4 1-7 3-11 5z" fill="#111" /><circle cx="14" cy="16" r="4.4" fill="#111" /><path d="M9 20c4 2 9 1 12-2" fill="none" stroke="#555" /></Ic> },
  { key: "vbox", node: <Ic size={38} view={30}><path d="M15 2l12 6v13l-12 7-12-7V8z" fill="#dce8f4" stroke="#8fb4d8" /><path d="M15 6l8 4-8 4-8-4z" fill="#2c5d8a" /><path d="M7 11l7 4v9l-7-4z" fill="#1c3f66" /><path d="M23 11l-7 4v9l7-4z" fill="#3a78aa" /></Ic> },
  { key: "freecad", node: <Ic size={36} view={30}><path d="M2 1h19v6H9v9h7v5H9v7H2z" fill="#d9161c" stroke="#3a0505" strokeWidth="1.2" /><Gear x={20} y={20} s={1} /></Ic> },
  { key: "gedit", node: <Ic size={36} view={30}><path d="M2 4h24v22H2z" fill="#f5f3ea" stroke="#a8a8a0" /><path d="M3 3h22" stroke="#777" strokeWidth="2" strokeDasharray="2 1.4" /><path d="M5 9h13M5 12h11M5 15h9M5 18h8M5 21h7" stroke="#888" /><path d="M13 24l2-5 9-10 3 3-9 10z" fill="#f09030" stroke="#b86010" strokeWidth="0.6" /><circle cx="27" cy="7" r="1.4" fill="#c33" /></Ic> },
  { key: "vlc", node: <Ic size={36} view={30}><path d="M13 2h4l8 24h3v3H2v-3h3z" fill="#f08a18" /><path d="M10 12h10l1.5 5h-13z" fill="#e8e8e4" /><path d="M12 6h6l1 3h-8z" fill="#e8e8e4" /></Ic> },
  { key: "openshot", node: <Ic size={36} view={30}><path d="M4 9h24v19H4z" fill="#55534d" stroke="#3a3a36" /><path d="M3 8L27 2l1 3L4 11z" fill="#eee" /><path d="M6 7l3 3M12 6l3 3M18 4l3 3" stroke="#111" strokeWidth="2.4" /><path d="M4 10h24v3H4z" fill="#eee" /><path d="M7 18h7M7 21h14" stroke="#aaa" /></Ic> },
  { key: "apps", h: "h-[36px]", node: (
    <div className="grid grid-cols-3 gap-x-[6px] gap-y-[5px]">
      {[0, 1, 2, 3, 4, 5, 6, 7, 8].map((i) => (
        <div key={i} className="h-[4px] w-[4px] rounded-full bg-[#f4f4f2]" />
      ))}
    </div>
  ) },
];

function Dock() {
  return (
    <div className="flex h-full w-[49px] shrink-0 flex-col overflow-hidden border-r border-[#8a8a84] bg-[#5d5d55]">
      {dockIcons.map((d) => (
        <div key={d.key} className={`relative flex shrink-0 items-center justify-center ${d.h ?? "h-[46px]"}`}>
          {d.key === "freecad" && <div className="absolute inset-x-[2px] inset-y-[1px] rounded-[4px] bg-[#7a7a72]" />}
          {d.key === "files" && (
            <div className="absolute left-[2px] top-[17px] flex flex-col gap-[3px]">
              <div className="h-[4px] w-[4px] rounded-full bg-[#e0632c]" />
              <div className="h-[4px] w-[4px] rounded-full bg-[#e0632c]" />
            </div>
          )}
          {(d.key === "freecad" || d.key === "openshot") && (
            <div className="absolute left-[2px] top-[21px] z-10 h-[4px] w-[4px] rounded-full bg-[#e0632c]" />
          )}
          <div className="relative">{d.node}</div>
        </div>
      ))}
    </div>
  );
}

function Check({ on }: { on?: boolean }) {
  if (!on) return <div className="h-[15px] w-[15px] shrink-0 rounded-[2px] border border-[#a8a8a3] bg-[#fbfbfa]" />;
  return (
    <div className="flex h-[15px] w-[15px] shrink-0 items-center justify-center rounded-[2px] border border-[#d0794c] bg-[#f3a67f]">
      <svg width="13" height="13" viewBox="0 0 13 13">
        <path d="M2 6l3.5 4L11 2" fill="none" stroke="#5b2f18" strokeWidth="1.8" />
      </svg>
    </div>
  );
}

function Btn({ children, cls }: { children: ReactNode; cls: string }) {
  return (
    <div className={`flex items-center justify-center rounded-[3px] border border-[#bdbdb8] bg-linear-to-b from-[#fbfbfa] to-[#ecece9] text-[14px] text-[#3c3c3c] ${cls}`}>
      {children}
    </div>
  );
}

function Select({ label, dim }: { label: string; dim?: boolean }) {
  return (
    <div className={`ml-auto mr-[15px] flex h-full w-[200px] items-center rounded-[3px] border border-[#bdbdb8] bg-linear-to-b from-[#f9f9f8] to-[#ededea] pl-[5px] text-[14px] ${dim ? "text-[#a8a8a4]" : "text-[#3c3c3c]"}`}>
      {label}
      <div className="ml-auto mr-[5px] flex flex-col gap-[3px]">
        <div className={`h-0 w-0 border-x-[3px] border-b-[3px] border-x-transparent ${dim ? "border-b-[#aaa]" : "border-b-[#555]"}`} />
        <div className={`h-0 w-0 border-x-[3px] border-t-[3px] border-x-transparent ${dim ? "border-t-[#aaa]" : "border-t-[#555]"}`} />
      </div>
    </div>
  );
}

function SectionHead({ title, h }: { title: string; h: string }) {
  return (
    <div className={`relative ml-px flex w-[438px] items-center rounded-t-[3px] border-t border-[#f9e2d6] bg-linear-to-r from-[#ee8a5e] via-[#f39f79] to-[#fbc9b1] text-[14px] font-bold text-[#fdfdfc] ${h}`}>
      <div className="relative ml-[9px] mr-[5px] h-[14px] w-[13px] bg-[#f4f1ea]">
        <div className="absolute -right-px -top-px h-[5px] w-[5px] rounded-full bg-[#fde047]" />
      </div>
      {title}
      <div className="absolute right-[4px] flex h-[14px] w-[14px] items-center justify-center rounded-full bg-[#fbf3ee]">
        <svg width="10" height="10" viewBox="0 0 10 10">
          <path d="M2 5l3-3 3 3M2 9l3-3 3 3" fill="none" stroke="#d9673a" strokeWidth="1.4" />
        </svg>
      </div>
    </div>
  );
}

function Arrow({ down }: { down?: boolean }) {
  return (
    <div className={`h-0 w-0 border-x-[3px] border-x-transparent ${down ? "border-t-[4px] border-t-[#666]" : "border-b-[4px] border-b-[#bbb]"}`} />
  );
}

function ListScroll({ before, thumb }: { before: string; thumb: string }) {
  return (
    <div className="flex h-full w-[12px] shrink-0 flex-col items-center rounded-[6px] border border-[#c5c5c0] bg-[#e9e9e5]">
      <div className="flex h-[12px] shrink-0 items-center"><Arrow /></div>
      <div className={`w-[12px] shrink-0 ${before}`} />
      <div className={`flex w-[12px] shrink-0 flex-col items-center justify-center gap-[2px] rounded-[6px] border border-[#c5c5c0] bg-[#f7f7f5] ${thumb}`}>
        <div className="h-px w-[4px] bg-[#aaa]" /><div className="h-px w-[4px] bg-[#aaa]" /><div className="h-px w-[4px] bg-[#aaa]" />
      </div>
      <div className="flex-1" />
      <div className="flex h-[12px] shrink-0 items-center"><Arrow down /></div>
    </div>
  );
}

const LineIcon = () => (
  <svg width="24" height="24" viewBox="0 0 24 24">
    <path d="M4 20L20 4" stroke="#558a1e" strokeWidth="3" />
    <path d="M4 20L20 4" stroke="#a6d84a" strokeWidth="1.2" />
    <circle cx="4" cy="20" r="3.6" fill="#c41414" stroke="#8a0b0b" strokeWidth="0.6" />
    <circle cx="20" cy="4" r="3.6" fill="#c41414" stroke="#8a0b0b" strokeWidth="0.6" />
  </svg>
);

function Panel() {
  const constraints = [1, 2, 3, 4, 5, 6, 7];
  const lines = [1, 2, 3, 4, 5, 6, 7];
  return (
    <div className="flex h-full w-[481px] shrink-0 flex-col bg-[#f1f1ee] text-[#3c3c3c]" style={ui}>
      <div className="flex h-[25px] shrink-0 items-center pl-[2px] pr-[10px] text-[14.5px] text-[#4a4a46]">
        Combo View
        <svg width="12" height="12" viewBox="0 0 12 12" className="ml-auto">
          <path d="M1 1h10v10H1z" fill="none" stroke="#77776f" />
          <path d="M4 3h5v5H4zM3 5v4h4" fill="none" stroke="#77776f" />
        </svg>
      </div>
      <div className="flex h-[30px] shrink-0 items-end pl-px">
        <div className="flex h-[27px] w-[58px] items-center justify-center rounded-t-[3px] border border-b-0 border-[#c8c8c3] bg-[#e8e8e4] pb-[2px] text-[14px]">Model</div>
        <div className="flex h-[30px] w-[50px] items-center justify-center rounded-t-[3px] border border-b-0 border-[#bdbdb8] bg-[#f1f1ee] pb-[2px] text-[14px]">Tasks</div>
      </div>
      <div className="flex min-h-0 w-[473px] flex-1 border border-b-2 border-[#c2c2bd] pl-px">
        <div className="flex h-full w-[457px] shrink-0 flex-col overflow-hidden bg-[#c5c5c0] pl-[9px]">
          <Btn cls="mx-auto mt-[20px] h-[23px] w-[81px] shrink-0 -translate-x-[4px]"><span><u>C</u>lose</span></Btn>

          <div className="mt-[19px]"><SectionHead title="Solver messages" h="h-[24px]" /></div>
          <div className="h-[117px] w-[439px] shrink-0 bg-[#f1f1ee] pl-[14px] pt-[14px] font-['Liberation_Serif',serif] text-[13px] leading-[16px]">
            <div className="text-[#555550]">Under-constrained sketch with 6 degrees of freedom</div>
            <div className="mt-[5px] text-[#2a9a2a]">Solved in 0 sec</div>
            <div className="mt-[26px] flex h-[25px] items-center pl-[3px] font-['Noto_Sans',sans-serif] text-[14px]">
              <Check />
              <span className="mb-[2px] ml-[7px] text-[14.5px]">Auto Update</span>
              <Btn cls="ml-auto mr-[15px] h-[25px] w-[200px]">Update</Btn>
            </div>
          </div>

          <div className="mt-[9px]"><SectionHead title="Edit controls" h="h-[24px]" /></div>

          <div className="mt-[11px]"><SectionHead title="Constraints" h="h-[24px]" /></div>
          <div className="h-[280px] w-[439px] shrink-0 bg-[#f1f1ee] pt-[15px] text-[14px]">
            <div className="flex h-[25px] items-center pl-[14px]">
              Filter:
              <Select label="All" />
            </div>
            <div className="mt-[10px] flex h-[15px] items-center pl-[17px]">
              <Check on />
              <span className="ml-[7px]">Hide Internal Aligment</span>
            </div>
            <div className="ml-[14px] mt-[10px] flex h-[191px] w-[410px]">
              <div className="h-full w-[398px] shrink-0 overflow-hidden border border-[#b9b9b4] bg-white pt-px">
                {constraints.map((n) => (
                  <div key={n} className="flex h-[26px] items-center pl-[6px] text-[14.5px]">
                    <Check on />
                    <div className="flex w-[38px] justify-center">
                      {n % 2 === 1 ? <div className="h-[4px] w-[22px] bg-[#a80f0f]" /> : <div className="h-[8px] w-[8px] rounded-full bg-[#b30d0d]" />}
                    </div>
                    <span>Constraint{n}</span>
                  </div>
                ))}
                <div className="ml-[6px] mt-[5px] h-[15px] w-[15px] rounded-[2px] border border-[#d0794c] bg-[#f3a67f]" />
              </div>
              <ListScroll before="h-[2px]" thumb="h-[30px]" />
            </div>
          </div>

          <div className="mt-[9px]"><SectionHead title="Elements" h="h-[23px]" /></div>
          <div className="h-[300px] w-[439px] shrink-0 bg-[#f1f1ee] pt-[16px] text-[14px]">
            <div className="flex h-[24px] items-center pl-[14px]">
              Type:
              <Select label="Edge" dim />
            </div>
            <div className="ml-[14px] mt-[8px] flex h-[190px] w-[410px]">
              <div className="h-full w-[398px] shrink-0 overflow-hidden border border-[#b9b9b4] bg-white">
                {lines.map((n) => (
                  <div key={n} className={`flex h-[26px] items-center pl-[3px] ${n === 1 ? "bg-linear-to-b from-[#dcdcd9] to-[#d0d0cd]" : ""}`}>
                    <LineIcon />
                    <span className="ml-[6px]">{n}-Line</span>
                  </div>
                ))}
                <div className="flex h-[26px] items-center pl-[3px]"><LineIcon /></div>
              </div>
              <ListScroll before="h-[2px]" thumb="h-[34px]" />
            </div>
          </div>
        </div>
        <div className="ml-px mt-[1px] flex h-full w-[12px] shrink-0 flex-col items-center rounded-[6px] border border-[#c5c5c0] bg-[#e9e9e5]">
          <div className="flex h-[14px] shrink-0 items-center"><Arrow /></div>
          <div className="flex h-[683px] w-[12px] shrink-0 items-center justify-center rounded-[6px] border border-[#c5c5c0] bg-[#f7f7f5]">
            <div className="flex flex-col gap-[2px]">
              <div className="h-px w-[4px] bg-[#aaa]" /><div className="h-px w-[4px] bg-[#aaa]" /><div className="h-px w-[4px] bg-[#aaa]" />
            </div>
          </div>
          <div className="flex-1" />
          <div className="flex h-[14px] shrink-0 items-center"><Arrow down /></div>
        </div>
      </div>
    </div>
  );
}

// sketch geometry, in page coordinates
const xs = [578, 731, 877, 1026, 1176];
const ys = [401, 554, 700, 845, 1000];
const cellX: [number, number][] = [[590, 135], [737, 135], [883, 135], [1030, 135]];
const cellY: [number, number][] = [[413.5, 134.5], [560.5, 134.5], [706.5, 134.5], [854, 134]];
const blue = "#0808bc";
const dots: [number, number][] = [
  [578, 401], [731, 401], [877, 401], [1026, 401], [1176, 401],
  [578, 554], [731, 554], [877, 554], [1176, 549],
  [578, 700], [731, 700], [877, 700], [1176, 698],
  [578, 846], [731, 846], [877, 846], [1176, 845],
  [578, 1000], [731, 1000], [877, 1000], [1030, 1000], [1176, 1000],
];

function Sketch() {
  const gridX = Array.from({ length: 30 }, (_, i) => 698.5 + i * 12);
  const gridY = Array.from({ length: 30 }, (_, i) => 523.5 + i * 12);
  return (
    <svg width="1390" height="847" viewBox="530 200 1390 847" className="block">
      <rect x={xs[0]} y={ys[0]} width={xs[4] - xs[0]} height={ys[4] - ys[0]} fill="#d4d5d2" />
      {gridX.map((x) => (
        <path key={x} d={`M${x} 523V882`} stroke="#b2b2b0" strokeDasharray="6 6" />
      ))}
      {gridY.map((y) => (
        <path key={y} d={`M698 ${y}H1056`} stroke="#b2b2b0" strokeDasharray="6 6" strokeDashoffset="6" />
      ))}
      {cellX.map(([x, w]) =>
        cellY.map(([y, h]) => (
          <rect key={`${x}-${y}`} x={x} y={y} width={w} height={h} rx="6" fill="none" stroke="#1c1c1c" strokeWidth="1.8" />
        )),
      )}
      {/* frame */}
      <path d={`M${xs[1]} 401H1176V1000H578V554`} fill="none" stroke={blue} strokeWidth="3" />
      <path d="M731 554V1000M877 401V1000" fill="none" stroke={blue} strokeWidth="3" />
      <path d="M731 554H877M578 700H877M578 846H877" fill="none" stroke={blue} strokeWidth="2.6" />
      <path d="M578 401H731V554H578Z" fill="none" stroke="#30a33c" strokeWidth="3" />
      <path d="M878 701H1056" stroke="#e05050" strokeWidth="1" />
      <path d="M590 549H725M596 703H725" stroke="#8a1c1c" strokeWidth="1" />
      {/* constraint glyphs */}
      {[655, 804, 951, 1101].map((x) => <path key={x} d={`M${x - 7} 380.5h14`} stroke="#e03020" strokeWidth="2" />)}
      {[655, 804, 953, 1103].map((x) => <path key={x} d={`M${x - 7} 1021h14`} stroke="#e03020" strokeWidth="2" />)}
      {[475, 628, 774, 923].map((y) => <path key={y} d={`M557 ${y - 7}v14`} stroke="#e03020" strokeWidth="2" />)}
      {[475, 623, 771, 922].map((y) => <path key={y} d={`M1197 ${y - 7}v14`} stroke="#e03020" strokeWidth="2" />)}
      {[534, 572, 681, 716, 827, 864].map((y) => (
        <path key={y} d={`M730 ${y - 3}h7M730 ${y + 3}h7`} stroke="#e03a1c" strokeWidth="2.4" />
      ))}
      {[[725, 549], [725, 558], [590, 549], [596, 558], [725, 695], [725, 703], [590, 695], [596, 703], [725, 841], [725, 850], [590, 841], [596, 850]].map(([x, y]) => (
        <circle key={`${x}-${y}`} cx={x} cy={y} r="2" fill="none" stroke="#b02018" strokeWidth="1.2" />
      ))}
      <path d="M851 559l3-7 9-1-8 2-2 4z" fill="#e03020" stroke="#e03020" />
      <path d="M851 851l3-7 9-1-8 2-2 4z" fill="#e03020" stroke="#e03020" />
      {dots.map(([x, y]) => <circle key={`${x}-${y}`} cx={x} cy={y} r="4" fill="#f4210d" />)}
      {/* axis cross */}
      <path d="M1878 1005V978" stroke="#2e8b3a" strokeWidth="2" />
      <path d="M1878 975l4 10h-8z" fill="#2e8b3a" />
      <path d="M1878 1005h29" stroke="#9a2a2a" strokeWidth="2" />
      <path d="M1903 1005l-7 4v-8z" fill="#9a2a2a" />
      <circle cx="1878" cy="1005" r="3.4" fill="#1c1c8c" />
      <text x="1881" y="978" fontSize="10" fill="#222" style={{ fontFamily: '"Liberation Sans", sans-serif' }}>Y</text>
      <text x="1881" y="1003" fontSize="10" fill="#222" style={{ fontFamily: '"Liberation Sans", sans-serif' }}>Z</text>
      <text x="1909" y="1005" fontSize="10" fill="#222" style={{ fontFamily: '"Liberation Sans", sans-serif' }}>X</text>
    </svg>
  );
}

function Viewer() {
  return (
    <div className="flex h-full min-w-0 flex-1 flex-col bg-[#f1f1ee]" style={ui}>
      <div className="h-[847px] shrink-0 bg-linear-to-b from-[#333366] to-[#9b9bab]">
        <Sketch />
      </div>
      <div className="flex flex-1 pl-px">
        <div className="flex h-[31px] w-[161px] items-center rounded-b-[3px] border border-t-0 border-[#c8c8c3] bg-[#f4f4f1] pl-[6px] text-[14px] text-[#4a4a46]">
          <svg width="18" height="18" viewBox="0 0 18 18">
            <path d="M1 1h9v3H4v5h3v2H4v6H1z" fill="#d9161c" stroke="#5a0808" strokeWidth="0.6" />
            <Gear x={11.5} y={12} s={0.6} />
          </svg>
          <span className="ml-[4px]">Unnamed1 : 1*</span>
          <svg width="12" height="12" viewBox="0 0 12 12" className="ml-auto mr-[10px]">
            <path d="M2 2l8 8M10 2l-8 8" stroke="#5a5a56" strokeWidth="3.4" />
          </svg>
        </div>
      </div>
    </div>
  );
}

export default function App() {
  return (
    <div className="flex h-[1080px] w-[1920px] flex-col overflow-hidden bg-[#f1f1ee]">
      <TopBar />
      <div className="flex min-h-0 flex-1">
        <Dock />
        <div className="flex min-w-0 flex-1 flex-col">
          <TitleBar />
          <MenuBar />
          <Toolbars />
          <div className="flex min-h-0 flex-1">
            <Panel />
            <Viewer />
          </div>
        </div>
      </div>
    </div>
  );
}
